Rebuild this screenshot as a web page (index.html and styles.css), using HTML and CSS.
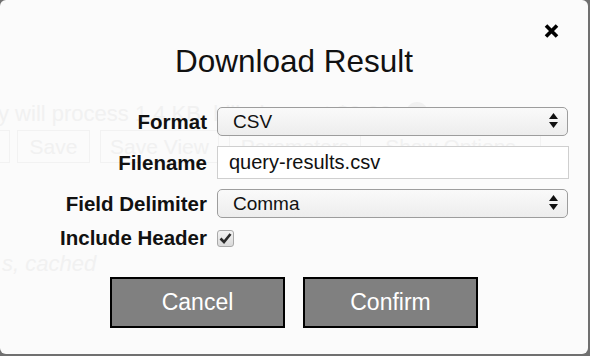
FILE: index.html
```html
<!DOCTYPE html>
<html lang="en">
<head>
  <meta charset="UTF-8">
  <meta name="viewport" content="width=device-width, initial-scale=1.0">
  <title>Download Result</title>
  <link rel="stylesheet" href="styles.css">
</head>
<body>
  <div class="modal">
    <!-- page behind the dialog, barely showing through -->
    <div class="ghost" aria-hidden="true">
      <div class="ghost-line">
        <span class="ghost-info">y will process 1.4 KB, billed</span>
        <span class="ghost-cost">cost $0.00 <i class="ghost-icon"></i></span>
      </div>
      <div class="ghost-bar">
        <span class="ghost-btn edge"></span>
        <span class="ghost-btn save">Save</span>
        <span class="ghost-btn view">Save View</span>
        <span class="ghost-btn params">Parameters</span>
        <span class="ghost-btn opts">Show Options</span>
      </div>
      <div class="ghost-note">s, cached</div>
    </div>

    <div class="modal-body">
      <h2 class="modal-title">Download Result</h2>
      <button class="close" type="button" aria-label="Close">
        <svg width="15" height="14" viewBox="0 0 15 14">
          <path d="M2 1.5 L13 12.5 M13 1.5 L2 12.5" stroke="#000" stroke-width="3.6" fill="none"/>
        </svg>
      </button>

      <form class="download-form">
        <label for="format">Format</label>
        <div class="select-wrap">
          <select id="format">
            <option>CSV</option>
            <option>JSON</option>
          </select>
          <svg class="arrows" width="9" height="16" viewBox="0 0 9 16">
            <polygon points="4.5,0 9,6 0,6" fill="#111"/>
            <polygon points="0,9 9,9 4.5,15" fill="#111"/>
          </svg>
        </div>

        <label for="filename">Filename</label>
        <input type="text" id="filename" value="query-results.csv">

        <label for="delimiter">Field Delimiter</label>
        <div class="select-wrap">
          <select id="delimiter">
            <option>Comma</option>
            <option>Tab</option>
          </select>
          <svg class="arrows" width="9" height="16" viewBox="0 0 9 16">
            <polygon points="4.5,0 9,6 0,6" fill="#111"/>
            <polygon points="0,9 9,9 4.5,15" fill="#111"/>
          </svg>
        </div>

        <label for="header" class="last">Include Header</label>
        <span class="checkbox" id="header" role="checkbox" aria-checked="true">
          <svg width="13" height="12" viewBox="0 0 13 12">
            <path d="M1.5 6.5 L5 10 L11.5 2" stroke="#2b2b2b" stroke-width="2.6" fill="none"/>
          </svg>
        </span>
      </form>

      <div class="actions">
        <button class="btn" type="button">Cancel</button>
        <button class="btn" type="button">Confirm</button>
      </div>
    </div>
  </div>
</body>
</html>
```

FILE: styles.css
```css
body {
  margin: 0;
  width: 590px;
  height: 356px;
  background-color: #707070;
  font-family: "Liberation Sans", Arial, sans-serif;
  color: #111;
}
.modal {
  position: relative;
  width: 588px;
  height: 354px;
  background-color: #fbfbfb;
  border-radius: 6px;
  overflow: hidden;
}

/* faded page content under the dialog */
.ghost {
  position: absolute;
  inset: 0;
  padding-top: 100px;
  color: #f1f1f1;
  font-size: 22px;
  white-space: nowrap;
}
.ghost-line {
  display: flex;
  height: 28px;
  line-height: 28px;
}
.ghost-info {
  width: 292px;
  margin-left: -2px;
}
.ghost-icon {
  display: inline-block;
  width: 22px;
  height: 22px;
  margin-left: 8px;
  border-radius: 50%;
  background-color: #f1f1f1;
  vertical-align: -3px;
}
.ghost-bar {
  display: flex;
  margin-top: 2px;
  margin-left: -60px;
  height: 33px;
  line-height: 31px;
  font-size: 21px;
}
.ghost-btn {
  border: 1px solid #f2f2f2;
  text-align: center;
}
.ghost-btn.edge { width: 68px; }
.ghost-btn.save { width: 71px; margin-left: 7px; }
.ghost-btn.view { width: 117px; margin-left: 10px; }
.ghost-btn.params { width: 130px; margin-left: 10px; }
.ghost-btn.opts { width: 179px; border-left: none; }
.ghost-note {
  margin-top: 88px;
  margin-left: 2px;
  font-style: italic;
  line-height: 26px;
}

.modal-body {
  position: relative;
  z-index: 1;
}
.modal-title {
  margin: 0;
  padding-top: 43px;
  font-size: 31.5px;
  line-height: 36px;
  font-weight: normal;
  text-align: center;
  color: #111;
}
.close {
  position: absolute;
  top: 24px;
  right: 29px;
  width: 15px;
  height: 14px;
  padding: 0;
  border: none;
  background: none;
  cursor: pointer;
}
.close svg {
  display: block;
}

.download-form {
  display: grid;
  grid-template-columns: 207px 351px;
  column-gap: 10px;
  row-gap: 10px;
  align-items: center;
  margin-top: 28px;
}
.download-form label {
  text-align: right;
  font-size: 20.5px;
  font-weight: bold;
  line-height: 24px;
}
.download-form label.last {
  line-height: 20px;
}
.select-wrap {
  position: relative;
  height: 29px;
}
.select-wrap select {
  width: 100%;
  height: 29px;
  appearance: none;
  border: 1px solid #9d9d9d;
  border-radius: 5px;
  background: linear-gradient(#fafafa, #ededed);
  padding: 0 0 0 15px;
  font-family: "Liberation Sans", Arial, sans-serif;
  font-size: 19px;
  color: #111;
}
.arrows {
  position: absolute;
  right: 10px;
  top: 6px;
  pointer-events: none;
}
input[type="text"] {
  box-sizing: border-box;
  width: 352px;
  height: 33px;
  border: 1px solid #cfcfcf;
  background-color: #fff;
  padding: 0 11px;
  font-family: "Liberation Sans", Arial, sans-serif;
  font-size: 20px;
  color: #111;
}
.checkbox {
  box-sizing: border-box;
  display: flex;
  align-items: center;
  justify-content: center;
  width: 17px;
  height: 17px;
  border: 1px solid #a9a9a9;
  border-radius: 3px;
  background: linear-gradient(#f4f4f4, #dadada);
}
.actions {
  display: flex;
  justify-content: center;
  gap: 18px;
  margin-top: 29px;
}
.btn {
  width: 175px;
  height: 51px;
  border: 2px solid #000;
  background-color: #808080;
  color: #fff;
  font-family: "Liberation Sans", Arial, sans-serif;
  font-size: 23px;
  cursor: pointer;
}
```
